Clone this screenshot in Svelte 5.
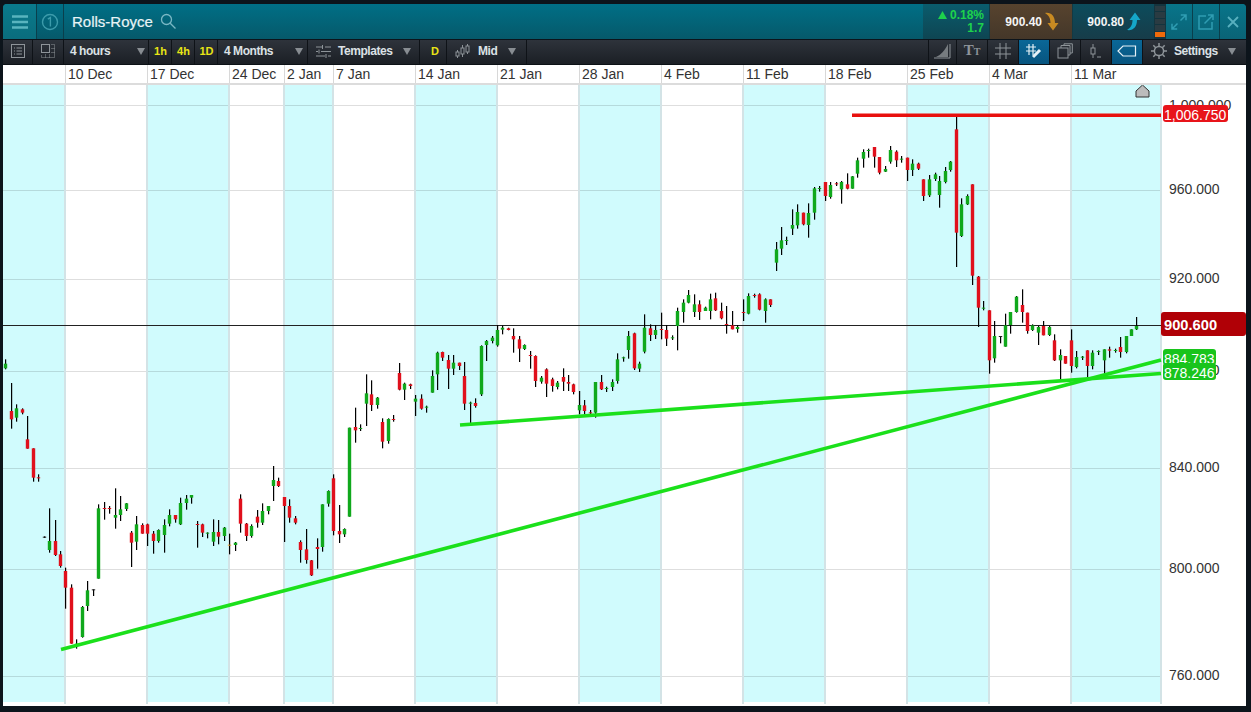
<script>
  const g = 'g', r = 'r', o = 'o', b = 'k';
  const sets = [
    { ox: 0, oy: 350, d: [
      [16,25,55,38,52,g],[33,96,233,180,205,r],[49,160,212,172,200,g],[66,172,190,175,185,r],[81,195,293,265,293,r],
      [99,292,392,292,380,r],[115,370,392,379,382,r],[132,556,561,557,560,b],[148,472,605,570,597,g],[165,507,615,570,612,r],
      [180,600,650,610,645,r],[195,650,773,660,710,r],[213,700,878,710,878,r],[229,865,893,878,885,g],[247,765,860,768,858,g],
      [262,690,780,718,765,g],[280,715,735,715,717,b],[295,460,683,472,683,g],[313,453,506,471,474,r],[328,465,488,471,474,r],
      [346,412,533,492,500,g],[361,435,510,475,492,g],[379,456,480,457,474,g],[393,540,648,545,575,r],[409,495,597,520,572,g],
      [425,517,548,522,548,r],[441,518,585,520,548,r],[459,540,608,548,570,r],[475,535,575,537,570,g],[492,505,605,522,552,g],
      [508,475,526,492,518,g],[525,492,515,492,505,r],[541,440,522,456,520,g],[559,432,476,443,456,g],[574,432,458,432,440,g],
      [592,510,590,519,522,r],[606,518,558,520,545,r],[622,544,562,545,548,g],[640,505,585,543,572,g],[655,507,580,543,557,r],
      [673,528,570,530,555,g],[688,548,610,581,584,o],[706,573,600,575,582,g],[720,430,545,443,518,r],[738,516,570,518,555,r],
      [754,520,560,525,555,g],[771,477,530,497,515,r],[787,457,522,480,515,g],[805,465,490,465,480,g],[820,345,450,387,405,g],
      [834,380,408,390,405,r],[852,438,573,438,465,r],[867,445,515,465,500,r],[884,495,520,502,515,r],[899,568,635,573,597,r],
      [918,534,638,595,627,r],[933,627,675,628,673,r],[951,562,653,588,594,r],[967,460,602,460,588,g],[985,418,467,420,458,g],
      [999,370,553,382,540,r],[1018,462,576,540,550,r],[1033,532,558,534,550,g],[1048,230,497,230,497,g]
    ]},
    { ox: 340, oy: 310, d: [
      [45,290,395,348,358,r],[61,340,360,351,354,g],[79,190,345,247,278,g],[94,208,300,250,282,r],[112,258,293,260,282,g],
      [126,322,412,333,392,r],[145,322,398,324,390,g],[160,312,332,324,327,r],[178,156,238,186,236,r],[193,215,267,218,236,g],
      [210,218,234,220,225,r],[226,252,315,263,272,g],[242,250,296,263,293,r],[259,284,305,287,290,g],[275,178,245,195,245,g],
      [292,122,237,125,190,g],[306,122,150,123,140,r],[324,132,234,147,173,r],[340,132,192,155,173,g],[357,155,177,155,165,r],
      [372,153,297,195,278,r],[391,272,340,275,278,g],[406,262,290,276,285,r],[424,103,255,105,250,g],[439,87,150,90,102,g],
      [457,75,97,80,90,g],[472,42,107,57,103,g],[487,44,70,50,56,g],[503,50,58,52,57,r],[520,52,125,75,85,r],
      [537,75,153,85,113,r],[553,100,117,102,114,g],[570,120,173,132,135,r],[585,133,228,135,210,r],[604,195,218,200,212,g],
      [618,172,258,175,218,r],[635,200,242,205,225,r],[652,210,235,215,228,g],[669,172,240,198,212,r],[685,192,240,213,218,r],
      [699,218,250,220,243,r],[718,240,310,282,298,g],[733,267,310,283,300,r],[750,297,310,304,307,r],[766,213,320,213,305,g],
      [783,192,237,213,235,r],[799,227,243,231,234,g],[817,205,240,213,228,g],[832,127,218,145,210,g],[850,137,152,139,142,g],
      [865,60,143,75,117,g],[882,65,177,67,172,r],[898,152,183,158,173,g],[913,10,127,50,122,g],[930,40,90,52,72,r],
      [946,42,84,57,72,g],[964,5,85,54,57,r],[979,42,105,57,83,r],[997,73,87,79,82,g]
    ]},
    { ox: 660, oy: 110, d: [
      [52,590,718,600,645,g],[70,565,635,575,603,g],[85,537,577,552,575,g],[103,550,618,580,603,g],[117,568,627,580,603,r],
      [135,587,600,590,600,g],[151,548,625,565,600,g],[165,545,600,562,598,r],[183,575,625,600,622,r],[199,585,668,639,642,r],
      [215,600,655,643,655,r],[232,642,665,648,654,g],[249,565,630,603,606,r],[265,547,610,555,608,g],[282,548,560,552,555,r],
      [297,547,598,550,596,r],[316,562,635,565,600,g],[330,565,588,565,582,r],
      [349,393,480,415,455,g],[364,348,432,388,413,g],[379,377,402,387,390,g],[397,295,372,342,353,g],[412,280,353,303,343,g],
      [429,305,343,305,340,r],[445,277,380,306,342,g],[463,228,326,232,305,g],[478,225,242,231,234,g],[495,213,270,213,255,r],
      [511,213,263,222,258,g],[528,213,225,217,220,r],[544,210,278,213,235,g],[560,187,235,220,233,r],[577,195,233,196,233,g],
      [592,140,200,148,188,g],[610,115,170,123,143,g],[625,113,140,117,120,g],[642,108,170,108,137,r],[657,138,190,138,185,r],
      [676,165,183,174,182,g],[691,105,158,117,152,g],[707,118,168,122,148,r],[724,135,155,143,146,g],[741,140,210,140,177,r],
      [757,145,195,158,177,g],[773,155,177,158,173,r],[788,205,270,205,255,r],[808,192,258,205,253,g],[824,185,210,190,204,g],
      [838,195,290,210,252,g],[856,168,217,180,213,g],[871,150,182,152,177,g],[888,15,468,55,365,r],[904,262,378,280,375,g],
      [922,250,282,255,280,g],[936,220,522,220,494,r],[954,495,648,497,590,r]
    ]},
    { ox: 960, oy: 270, d: [
      [70,90,118,110,113,g],[87,118,308,118,268,r],[103,150,275,195,262,g],[121,195,217,195,198,b],[136,128,227,163,227,g],[151,123,188,123,162,g]
    ]},
    { ox: 1000, oy: 280, d: [
      [48,45,95,47,93,g],[65,25,125,72,93,r],[81,95,158,95,150,r],[97,130,150,133,147,g],[115,135,192,138,155,g],
      [130,120,163,135,163,r],[148,135,165,138,162,g],[163,160,240,178,238,r],[181,205,297,222,238,g],[195,225,248,225,248,r],
      [213,145,275,178,255,r],[229,210,262,228,258,g],[245,225,237,227,230,g],[262,208,288,208,255,r],[277,208,265,215,255,g],
      [295,208,222,210,213,g],[311,205,280,205,238,g],[328,197,230,205,209,r],[344,203,215,207,210,g],[361,168,230,198,213,r],
      [377,165,217,165,213,g],[394,145,165,145,165,g],[409,108,147,135,145,g]
    ]}
  ];
  const candles = sets.flatMap((s) =>
    s.d.map(([x, wt, wb, bt, bb, c]) => ({
      x: Math.round(x / 3 + s.ox),
      wt: wt / 3 + s.oy,
      wh: (wb - wt) / 3,
      bt: bt / 3 + s.oy,
      bh: Math.max((bb - bt) / 3, 1),
      c
    }))
  );
  const bands = [[3, 62], [147, 82], [284, 49], [415, 82], [579, 82], [743, 82], [907, 82], [1071, 90]];
  const vlines = [65, 147, 229, 284, 333, 415, 497, 579, 661, 743, 825, 907, 989, 1071, 1161];
  const hlines = [104, 189, 278, 370, 467, 568, 675];
  const prices = [
    ['1,000.000', 109], ['960.000', 193], ['920.000', 282], ['880.000', 374],
    ['840.000', 471], ['800.000', 572], ['760.000', 679]
  ];
  const dates = [
    ['10 Dec', 82], ['17 Dec', 82], ['24 Dec', 55], ['2 Jan', 49], ['7 Jan', 82], ['14 Jan', 82], ['21 Jan', 82],
    ['28 Jan', 82], ['4 Feb', 82], ['11 Feb', 82], ['18 Feb', 82], ['25 Feb', 82], ['4 Mar', 82], ['11 Mar', 175]
  ];
</script>

<div class="win">
  <header class="head">
    <div class="hcell burger">
      <svg width="18" height="14" viewBox="0 0 18 14"><path d="M1 1.5h16M1 7h16M1 12.5h16" /></svg>
    </div>
    <div class="hcell num">
      <svg width="18" height="18" viewBox="0 0 18 18"><circle cx="9" cy="9" r="7.5" /><path d="M6.8 6.2 9.4 4.6V13.6" /></svg>
    </div>
    <div class="title">Rolls-Royce</div>
    <svg class="search" width="17" height="17" viewBox="0 0 17 17"><circle cx="6.5" cy="6.5" r="5" /><path d="M10.2 10.2 15.5 15.5" /></svg>
    <div class="fill"></div>
    <div class="change">
      <div class="pct"><svg width="9" height="8" viewBox="0 0 9 8"><polygon points="4.5,0 9,8 0,8" /></svg>0.18%</div>
      <div>1.7</div>
    </div>
    <div class="quote sell">
      900.40
      <svg width="14" height="19" viewBox="0 0 14 19"><path d="M0 1C6 0 10 4 10 11H13.5L8 18.5 2.5 11H5.5C5.5 6.5 4 3.5 0 1Z" /></svg>
    </div>
    <div class="quote buy">
      900.80
      <svg width="14" height="19" viewBox="0 0 14 19"><path d="M0 18C6 19 10 15 10 8H13.5L8 .5 2.5 8H5.5C5.5 12.5 4 15.5 0 18Z" /></svg>
    </div>
    <div class="signal"><i></i><i></i><i></i><i></i><i class="on"></i></div>
    <div class="hcell tool">
      <svg width="16" height="16" viewBox="0 0 16 16"><path d="M1 15 6.5 9.5M1 9.8V15H6.2M15 1 9.5 6.5M9.8 1H15V6.2" /></svg>
    </div>
    <div class="hcell tool">
      <svg width="18" height="18" viewBox="0 0 18 18"><path d="M9 3H2V16H15V9M7.5 10.5 16 2M11 2H16V7" /></svg>
    </div>
    <div class="hcell tool close">
      <svg width="12" height="12" viewBox="0 0 12 12"><path d="M1 1 11 11M11 1 1 11" /></svg>
    </div>
  </header>

  <nav class="bar">
    <div class="tb ic w30">
      <svg width="14" height="14" viewBox="0 0 14 14"><rect x=".5" y=".5" width="13" height="13" /><path d="M3 4h1M5.5 4H11M3 7h1M5.5 7H11M3 10h1M5.5 10H11" /></svg>
    </div>
    <div class="tb ic w31">
      <svg width="14" height="14" viewBox="0 0 14 14"><rect x=".5" y=".5" width="8" height="8" /><path class="dots" d="M10.5 .5H13.5V13.5H.5V10.5M10.5 4.5H13.5M10.5 8.5H13.5M4.5 10.5V13.5M8.5 10.5V13.5" /></svg>
    </div>
    <div class="tb drop hours">4 hours<span class="arr"></span></div>
    <div class="tb y">1h</div>
    <div class="tb y">4h</div>
    <div class="tb y">1D</div>
    <div class="tb drop months">4 Months<span class="arr"></span></div>
    <div class="tb drop templates">
      <svg width="15" height="13" viewBox="0 0 15 13"><path d="M0 2h6M9 2h6M6.5 0v4M0 6.5h2M5 6.5h10M3 4.5v4M0 11h9M12 11h3M10 9v4" /></svg>
      Templates<span class="arr"></span>
    </div>
    <div class="tb y dd">D</div>
    <div class="tb drop mid">
      <svg width="15" height="15" viewBox="0 0 15 15"><rect x="1" y="8" width="3" height="4" /><rect x="6" y="4" width="3" height="6" /><rect x="11" y="2" width="3" height="6" /><path d="M2.5 6v2M2.5 12v2M7.5 1v3M7.5 10v3M12.5 0v2M12.5 8v2" /></svg>
      Mid<span class="arr"></span>
    </div>
    <div class="fill"></div>
    <div class="tb ic w29 first">
      <svg width="18" height="16" viewBox="0 0 18 16"><path class="solid" d="M2 14C7 12 11 7 14 1V14Z" /><path d="M0 15H16V1" /></svg>
    </div>
    <div class="tb ic w31 tt"><span class="t1">T</span><span class="t2">T</span></div>
    <div class="tb ic w31">
      <svg width="16" height="16" viewBox="0 0 16 16"><path d="M5 0V16M11 0V16M0 5H16M0 11H16" /></svg>
    </div>
    <div class="tb ic w31 act">
      <svg width="18" height="16" viewBox="0 0 18 16"><path d="M4 1V12M8 1V12M1 4H11M1 8H11" /><path class="pen" d="M8 14 15 7" /></svg>
    </div>
    <div class="tb ic w31">
      <svg width="16" height="16" viewBox="0 0 16 16"><rect x="1" y="5" width="10" height="10" /><path d="M4 5V2.5H13V12H11M7 2.5V.8H15.3V10H13" /></svg>
    </div>
    <div class="tb ic w31">
      <svg width="14" height="17" viewBox="0 0 14 17"><rect x="2" y="5" width="4" height="6" /><path d="M4 1V5M4 11V15M8 14H12" /></svg>
    </div>
    <div class="tb ic w31 act">
      <svg width="20" height="12" viewBox="0 0 20 12"><path d="M6 1H18.5V11H6L1 6Z" /></svg>
    </div>
    <div class="tb drop settings">
      <svg width="16" height="16" viewBox="0 0 16 16"><circle cx="8" cy="8" r="4.6" /><path d="M8 0V3.4M8 12.6V16M0 8H3.4M12.6 8H16M2.3 2.3 4.7 4.7M11.3 11.3 13.7 13.7M13.7 2.3 11.3 4.7M4.7 11.3 2.3 13.7" /></svg>
      Settings<span class="arr"></span>
    </div>
  </nav>

  <div class="dates">
    <div class="lead"></div>
    {#each dates as [label, w]}
      <div class="date" style="width:{w}px">{label}</div>
    {/each}
  </div>

  <div class="chart">
    <svg class="plot" width="1243" height="621" viewBox="3 84 1243 621">
      {#each bands as [x, w]}
        <rect x={x} y="84" width={w} height="617" fill="#d0fbfd" />
      {/each}
      {#each hlines as y}
        <rect x="3" y={y} width="1158" height="1" fill="#000" opacity="0.13" />
      {/each}
      {#each vlines as x}
        <rect x={x - 1} y="84" width="2" height="619" fill="#d3e3e6" />
      {/each}
      {#each prices as [label, y]}
        <text class="price" x="1169" y={y}>{label}</text>
      {/each}
      <rect x="3" y="324" width="1158" height="1" fill="#222" />
      {#each candles as k}
        <rect x={k.x} y={k.wt} width="1.2" height={k.wh} fill="#000" />
        <rect x={k.x - 1.2} y={k.bt} width="3.4" height={k.bh} class={'c' + k.c} />
      {/each}
      <line x1="61" y1="648.5" x2="1161" y2="359" class="tl" />
      <line x1="460" y1="424" x2="1161" y2="372.5" class="tl" />
      <line x1="852" y1="114.3" x2="1161" y2="114.3" class="rl" />
      <polygon points="1136,90 1142.5,84 1149,90 1149,96 1136,96" class="flag" />

      <rect x="1163" y="104" width="65" height="17" rx="3" fill="#e8141a" />
      <text class="tag" x="1164" y="119">1,006.750</text>
      <rect x="1161" y="311" width="85" height="24" rx="3" fill="#b00006" />
      <text class="tag big" x="1164" y="329">900.600</text>
      <rect x="1163" y="348" width="53" height="16" rx="3" fill="#18c41c" />
      <text class="tag" x="1164" y="363">884.783</text>
      <rect x="1163" y="362" width="53" height="17" rx="3" fill="#18c41c" />
      <text class="tag" x="1164" y="377">878.246</text>
    </svg>
  </div>
</div>

<style>
  :global(body) {
    margin: 0;
    background: #0c141b;
  }
  .win {
    width: 1243px;
    height: 712px;
    margin-left: 3px;
    padding-top: 4px;
    box-sizing: border-box;
    display: flex;
    flex-direction: column;
    font-family: "Liberation Sans", Arial, sans-serif;
    overflow: hidden;
  }
  .fill {
    flex: 1;
  }
  .head {
    height: 35px;
    flex: none;
    display: flex;
    align-items: stretch;
    background: linear-gradient(#006f86, #06596a);
    border-radius: 4px 4px 0 0;
    margin-bottom: 1px;
    overflow: hidden;
  }
  .hcell {
    display: flex;
    align-items: center;
    justify-content: center;
    border-right: 1px solid #0a3f4c;
    box-sizing: border-box;
  }
  .burger {
    width: 34px;
    background: linear-gradient(#0a7a8c, #0a6d7d);
  }
  .burger path {
    fill: none;
    stroke: #58b4bf;
    stroke-width: 2.6;
  }
  .num {
    width: 27px;
  }
  .num circle,
  .num path {
    fill: none;
    stroke: #3c9bab;
    stroke-width: 1.4;
  }
  .title {
    margin-left: 8px;
    font-size: 15px;
    line-height: 36px;
    color: #e8f4f6;
    -webkit-text-stroke: 0.2px #e8f4f6;
  }
  .search {
    align-self: center;
    margin-left: 7px;
    fill: none;
    stroke: #79b7c4;
    stroke-width: 1.3;
  }
  .change {
    width: 66px;
    box-sizing: border-box;
    padding: 5px 5px 0 0;
    background: linear-gradient(#0a5c6d, #0e4552);
    color: #1ed24c;
    font-size: 12px;
    font-weight: bold;
    line-height: 13px;
    text-align: right;
  }
  .pct svg {
    fill: #1ed24c;
    margin-right: 3px;
  }
  .quote {
    display: flex;
    align-items: center;
    justify-content: flex-end;
    gap: 3px;
    padding-right: 13px;
    box-sizing: border-box;
    color: #f4f4f4;
    font-size: 12px;
    font-weight: bold;
    border-left: 1px solid #123a44;
  }
  .sell {
    width: 83px;
    background: linear-gradient(#57432e, #443729);
  }
  .sell path {
    fill: #c88a22;
  }
  .buy {
    width: 82px;
    background: linear-gradient(#0c4c5c, #173c49);
  }
  .buy path {
    fill: #15a6c8;
  }
  .signal {
    width: 12px;
    display: flex;
    flex-direction: column;
    gap: 1px;
    padding: 2px 1px 2px;
    box-sizing: border-box;
    background: #14343e;
  }
  .signal i {
    flex: 1;
    background: #2a3b42;
  }
  .signal i.on {
    background: #ee6a0a;
  }
  .tool {
    width: 27px;
    background: linear-gradient(#08758a, #0a6376);
  }
  .tool svg {
    fill: none;
    stroke: #2f9db2;
    stroke-width: 1.5;
  }
  .close {
    width: 26px;
    border-right: 0;
  }
  .close svg {
    stroke: #58b0bf;
    stroke-width: 1.8;
  }
  .bar {
    height: 24px;
    flex: none;
    display: flex;
    background: linear-gradient(#2e333b, #1b1f25);
    color: #dce1e5;
    font-size: 12px;
    font-weight: bold;
    border-bottom: 1px solid #0c1116;
    letter-spacing: -0.45px;
  }
  .tb {
    display: flex;
    align-items: center;
    box-sizing: border-box;
    border-right: 1px solid #0e1217;
    padding-bottom: 2px;
    flex: none;
    position: relative;
  }
  .tb svg {
    fill: none;
    stroke: #8e9499;
    stroke-width: 1;
    flex: none;
  }
  .ic {
    justify-content: center;
  }
  .w29 {
    width: 29px;
  }
  .first {
    border-left: 1px solid #0e1217;
  }
  .w30 {
    width: 30px;
  }
  .w31 {
    width: 31px;
  }
  .tb .dots {
    stroke-dasharray: 1 1;
  }
  .tb .solid {
    fill: #777c80;
    stroke: none;
  }
  .drop {
    padding-left: 6px;
  }
  .arr {
    position: absolute;
    top: 8px;
    right: 4px;
    border: 4.5px solid transparent;
    border-top: 7px solid #888d92;
    border-bottom: 0;
  }
  .hours {
    width: 85px;
  }
  .hours .arr {
    right: 3px;
  }
  .months {
    width: 90px;
  }
  .months .arr {
    right: 4px;
  }
  .templates {
    width: 112px;
    padding-left: 8px;
    gap: 7px;
  }
  .templates .arr {
    right: 8px;
  }
  .mid {
    width: 80px;
    padding-left: 8px;
    gap: 8px;
  }
  .mid .arr {
    right: 10px;
  }
  .y {
    width: 23px;
    justify-content: center;
    padding-left: 1px;
    color: #e8e515;
    font-size: 11px;
    letter-spacing: 0;
  }
  .dd {
    width: 27px;
    padding-left: 4px;
  }
  .tt {
    font-family: "Liberation Serif", serif;
    color: #8e9499;
    align-items: baseline;
    padding-top: 2px;
    letter-spacing: 0;
  }
  .t1 {
    font-size: 15px;
  }
  .t2 {
    font-size: 10px;
  }
  .act {
    background: linear-gradient(#0a6797, #07547f);
  }
  .act svg {
    stroke: #e4f0f6;
    stroke-width: 1.2;
  }
  .act .pen {
    stroke-width: 3;
  }
  .settings {
    width: 103px;
    padding-left: 8px;
    gap: 7px;
    border-right: 0;
  }
  .settings .arr {
    right: 10px;
  }
  .settings svg {
    stroke-width: 1.5;
  }
  .dates {
    height: 20px;
    flex: none;
    display: flex;
    background: #fff;
    border-bottom: 2px solid #dcdcdc;
    box-sizing: border-box;
    font-size: 14px;
    line-height: 18px;
    color: #333;
  }
  .lead {
    width: 62px;
    flex: none;
  }
  .date {
    flex: none;
    box-sizing: border-box;
    padding-left: 2px;
    border-left: 1px solid #d8d8d8;
    white-space: nowrap;
  }
  .chart {
    height: 621px;
    flex: none;
    background: #fff;
    overflow: hidden;
  }
  .plot {
    display: block;
  }
  .price {
    font-size: 14px;
    fill: #333;
  }
  .cg {
    fill: #10a81c;
  }
  .cr {
    fill: #e0101c;
  }
  .co {
    fill: #e0a030;
  }
  .ck {
    fill: #222;
  }
  .tl {
    stroke: #1be01b;
    stroke-width: 3.6;
  }
  .rl {
    stroke: #e8100e;
    stroke-width: 3.6;
  }
  .flag {
    fill: #bcbcbc;
    stroke: #333;
    stroke-width: 1;
  }
  .tag {
    font-size: 14px;
    fill: #fff;
  }
  .big {
    font-size: 14.7px;
    font-weight: bold;
  }
</style>
